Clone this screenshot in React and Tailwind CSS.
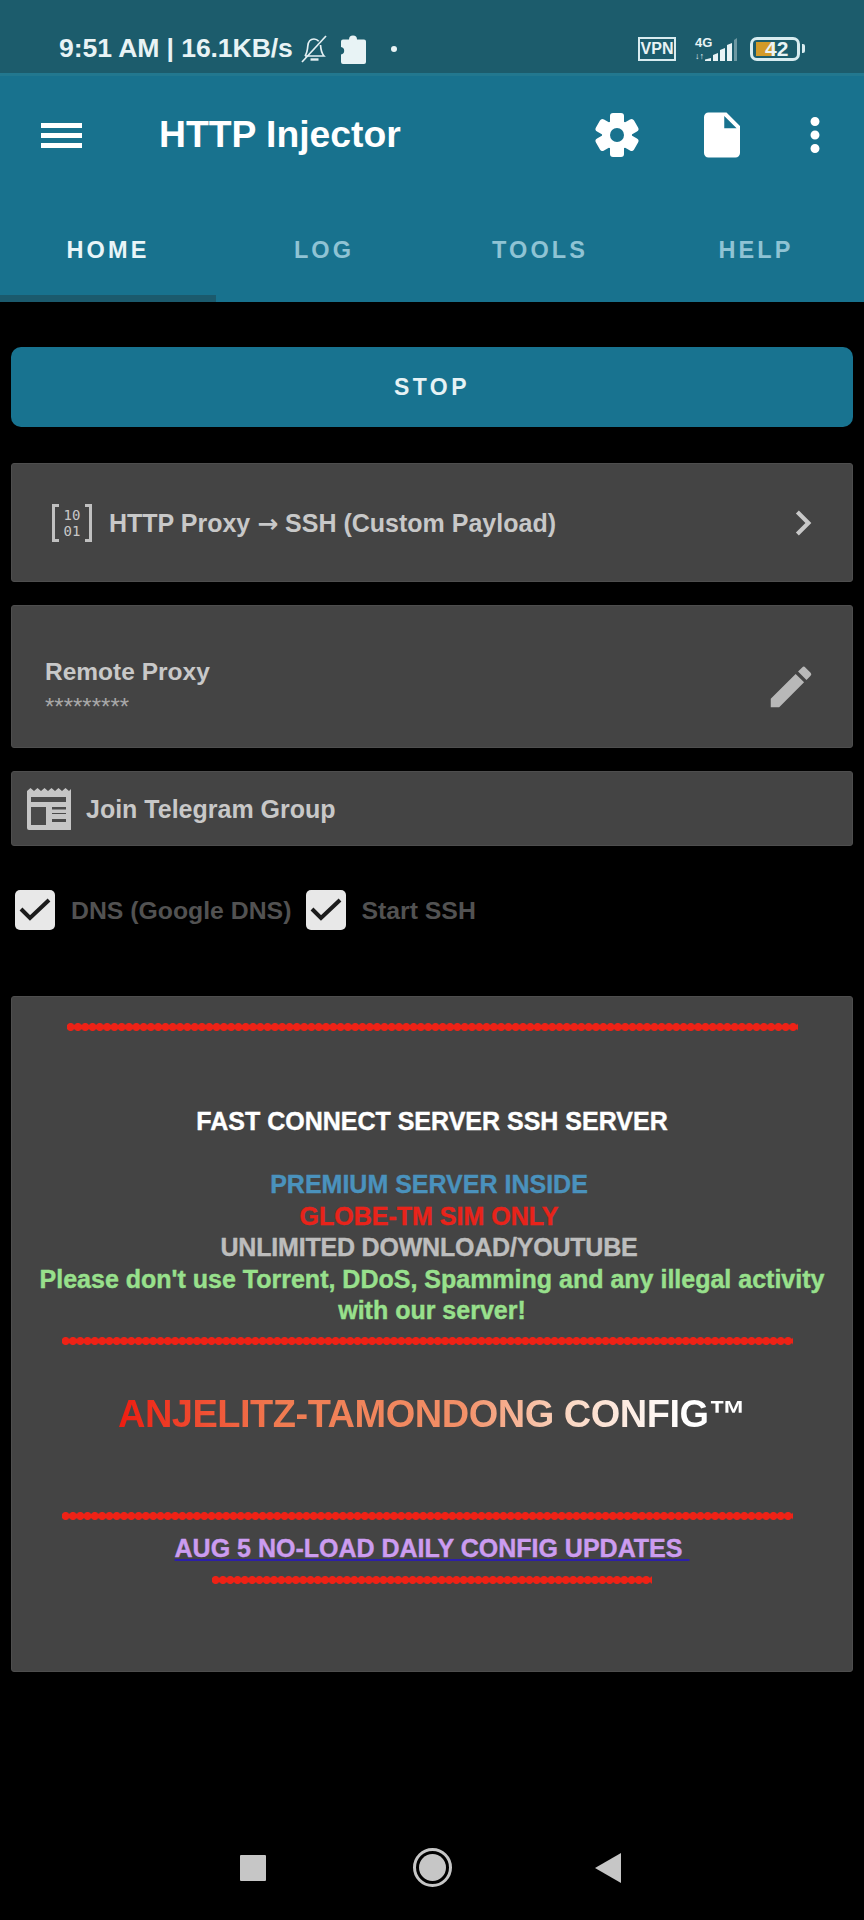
import { MdInsertDriveFile, MdMoreVert, MdChevronRight, MdEdit } from "react-icons/md";

function BellOff() {
  return (
    <svg viewBox="0 0 28 30" className="w-[28px] h-[30px] text-[#e4f0f3]" fill="none" stroke="currentColor" strokeWidth="1.700">
      <path d="M5 22c2-3 2.500-6 2.800-10C8.200 7.500 10.500 5 14 5c2 0 3.500 .8 4.700 2.300M20.500 11c.3 4 .8 8 3.500 11H5" />
      <path d="M2 28L26 2" />
      <path d="M10.500 25.500h8" strokeWidth="2.400" />
    </svg>
  );
}

function Puzzle() {
  return (
    <svg viewBox="0 0 26 30" className="h-[30px] w-[26px] text-[#e8f3f5]" fill="currentColor">
      <path d="M9 5.500a4 4 0 0 1 8 0h7a2 2 0 0 1 2 2V28a2 2 0 0 1-2 2H3a2 2 0 0 1-2-2v-7.500a3.800 3.800 0 0 0 0-7.500V7.500a2 2 0 0 1 2-2z" />
    </svg>
  );
}

function Gear() {
  return (
    <svg viewBox="0 0 46 46" className="h-[46px] w-[46px]" fill="white">
      <rect x="16" y="1" width="14" height="44" rx="3" />
      <rect x="16" y="1" width="14" height="44" rx="3" transform="rotate(60 23 23)" />
      <rect x="16" y="1" width="14" height="44" rx="3" transform="rotate(120 23 23)" />
      <circle cx="23" cy="23" r="15" />
      <circle cx="23" cy="23" r="7" fill="#18728e" />
    </svg>
  );
}

function Newspaper() {
  return (
    <svg viewBox="0 0 45 45" className="w-[45px] h-[45px] text-[#c6c6c6]">
      <path fill="currentColor" d="M1 5l3.500-3 3.500 3 3.500-3 3.500 3 3.500-3 3.500 3 3.500-3 3.500 3 3.500-3 3.500 3 3.500-3 3.500 3 3-3v40a2 2 0 0 1-2 2H3a2 2 0 0 1-2-2z" />
      <path fill="#4a4a4a" d="M5 11h35v5H5zM5 21h15v18H5zM26 21h14v2.500H26zM26 27h14v1H26zM26 33h14v3H26z" />
    </svg>
  );
}

function CheckBox() {
  return (
    <span className="flex h-[40px] w-[40px] items-center justify-center rounded-[5px] bg-[#e8e8e8]">
      <svg viewBox="0 0 40 40" className="h-[40px] w-[40px]" fill="none" stroke="#1c1c1c" strokeWidth="4">
        <path d="M6 19l9 9L34 10" />
      </svg>
    </span>
  );
}

function Dots({ className }) {
  return (
    <div className={"h-[10px] bg-[radial-gradient(circle,#ee2216_3.6px,transparent_4.4px)] bg-[length:7.3px_10px] bg-repeat-x " + className} />
  );
}

export default function App() {
  return (
    <div className="flex h-[1920px] w-[864px] flex-col overflow-hidden bg-black font-['Liberation_Sans',Arial,sans-serif]">
      {/* status bar */}
      <div className="flex h-[73px] shrink-0 items-center bg-[#1c5c6c] pl-[59px] pr-[59px] pt-[24px] text-[#e8f3f5]">
        <span className="text-[26.600px] font-bold leading-none tracking-[-0.1px]">9:51 AM | 16.1KB/s</span>
        <span className="ml-[7px]"><BellOff /></span>
        <span className="ml-[12px]"><Puzzle /></span>
        <span className="ml-[25px] h-[6px] w-[6px] rounded-full bg-[#e8f3f5]" />
        <span className="ml-auto flex h-[24px] w-[38px] items-center justify-center border-[2px] border-[#d8ecf0] text-[16px] font-bold leading-none">VPN</span>
        <span className="ml-[19px] flex w-[18px] flex-col items-start text-[13px] font-bold leading-[16px]">
          <span>4G</span>
          <span className="text-[9px] leading-[11px]">↓↑</span>
        </span>
        <svg viewBox="0 0 32 26" className="-ml-[8px] h-[26px] w-[32px]" fill="currentColor">
          <path d="M0 25h6v-3l-6 1.500zM8 25h5v-8l-5 2zM15 25h5V12l-5 2zM22 25h5V7l-5 2z" />
          <path d="M29 25h3V2l-3 2z" opacity=".4" />
        </svg>
        <span className="relative ml-[13px] flex h-[24px] w-[50px] items-center rounded-[7px] border-[3px] border-[#d8ecf0] pl-[3px]">
          <span className="h-[14px] w-[19px] bg-[#d29a28]" />
          <span className="absolute left-[12px] text-[21px] font-bold leading-none">42</span>
        </span>
        <span className="ml-[2px] h-[9px] w-[3px] rounded-r-[2px] bg-[#d8ecf0]" />
      </div>

      {/* app bar */}
      <header className="h-[229px] shrink-0 border-t-[3px] border-[#22788f] bg-[#18728e] text-white">
        <div className="mt-[22px] flex h-[74px] items-center">
          <div className="ml-[41px] flex w-[41px] flex-col gap-[5px]">
            <span className="h-[5px] bg-white" />
            <span className="h-[5px] bg-white" />
            <span className="h-[5px] bg-white" />
          </div>
          <h1 className="ml-[77px] text-[37.300px] font-bold leading-none">HTTP Injector</h1>
          <span className="ml-auto"><Gear /></span>
          <MdInsertDriveFile className="ml-[55px] h-[54px] w-[54px]" />
          <MdMoreVert className="ml-[39px] mr-[22px] h-[54px] w-[54px]" />
        </div>
        <nav className="mt-[43px] grid h-[87px] grid-cols-4 text-[23.500px] font-bold tracking-[3.100px]">
          <div className="flex flex-col items-center">
            <span className="flex h-[80px] items-center pb-[8px] text-[#e8f5f8]">HOME</span>
            <span className="h-[7px] w-full bg-[#1b5a6d]" />
          </div>
          <span className="flex h-[80px] items-center justify-center pb-[8px] text-[#8fc3d4]">LOG</span>
          <span className="flex h-[80px] items-center justify-center pb-[8px] text-[#8fc3d4]">TOOLS</span>
          <span className="flex h-[80px] items-center justify-center pb-[8px] text-[#8fc3d4]">HELP</span>
        </nav>
      </header>

      {/* main */}
      <main className="flex flex-col px-[11px] pt-[45px]">
        <button className="flex h-[80px] items-center justify-center rounded-[10px] bg-[#187390] text-[23px] font-bold tracking-[3.500px] text-[#e6f2f5]">
          STOP
        </button>

        <div className="mt-[36px] flex h-[119px] items-center rounded-[3px] border border-[#4e4e4e] bg-[#444444] text-[#c8c8c8]">
          <div className="ml-[40px] flex h-[38px] w-[40px] items-center justify-between">
            <span className="h-full w-[7px] border-y-[3px] border-l-[3px] border-[#c0c0c0]" />
            <span className="text-center font-['DejaVu_Sans_Mono',monospace] text-[14px] leading-[16px]">10<br />01</span>
            <span className="h-full w-[7px] border-y-[3px] border-r-[3px] border-[#c0c0c0]" />
          </div>
          <span className="ml-[17px] pt-[2px] text-[25px] font-bold leading-none">
            HTTP Proxy <span className="font-['DejaVu_Sans',sans-serif] text-[25px]">→</span> SSH (Custom Payload)
          </span>
          <MdChevronRight className="ml-auto mr-[24px] h-[50px] w-[50px]" />
        </div>

        <div className="mt-[23px] flex h-[143px] items-center rounded-[3px] border border-[#4e4e4e] bg-[#444444] pt-[20px] text-[#c8c8c8]">
          <div className="ml-[33px] flex flex-col">
            <span className="text-[24.500px] font-bold leading-[30px]">Remote Proxy</span>
            <span className="mt-[10px] text-[24px] leading-[20px] text-[#a8a8a8]">*********</span>
          </div>
          <MdEdit className="ml-auto mr-[34px] h-[54px] w-[54px] text-[#b8b8b8]" />
        </div>

        <div className="mt-[23px] flex h-[75px] items-center rounded-[3px] border border-[#4e4e4e] bg-[#444444] text-[#c8c8c8]">
          <span className="ml-[14px]"><Newspaper /></span>
          <span className="ml-[15px] pt-[2px] text-[25px] font-bold leading-none">Join Telegram Group</span>
        </div>

        <div className="mt-[44px] flex h-[40px] items-center pl-[4px] text-[24.800px] font-bold leading-none text-[#525252]">
          <CheckBox />
          <span className="ml-[16px] pt-[2px]">DNS (Google DNS)</span>
          <span className="ml-[15px]"><CheckBox /></span>
          <span className="ml-[15px] pt-[2px]">Start SSH</span>
        </div>

        {/* message box */}
        <section className="mt-[66px] flex h-[676px] flex-col items-center rounded-[3px] border border-[#4e4e4e] bg-[#444444] text-center font-bold [-webkit-text-stroke:0.4px]">
          <Dots className="mt-[25px] w-[731px]" />
          <p className="mt-[73px] text-[25px] leading-[32px] text-white">FAST CONNECT SERVER SSH SERVER</p>
          <div className="mt-[32px] flex flex-col text-[25px] leading-[31.500px]">
            <span className="-translate-x-[3px] text-[#4a92bd]">PREMIUM SERVER INSIDE</span>
            <span className="-translate-x-[3px] text-[#e8231a]">GLOBE-TM SIM ONLY</span>
            <span className="-translate-x-[3px] tracking-[-0.2px] text-[#bdbdbd]">UNLIMITED DOWNLOAD/YOUTUBE</span>
            <span className="text-[#98e08c]">Please don't use Torrent, DDoS, Spamming and any illegal activity<br />with our server!</span>
          </div>
          <Dots className="mt-[9px] w-[731px] -translate-x-[5px]" />
          <p className="mt-[46px] bg-[linear-gradient(90deg,#ee1c10_0%,#f07a50_25%,#f29068_55%,#fbd8c4_72%,#ffffff_90%)] bg-clip-text text-[38px] leading-[44px] tracking-[-0.5px] text-transparent [-webkit-text-stroke:0px]">ANJELITZ-TAMONDONG CONFIG™</p>
          <Dots className="mt-[75px] w-[731px] -translate-x-[5px]" />
          <p className="mt-[12px] text-[25px] leading-[30px] text-[#cc9cf0] underline decoration-[#2d1fa8] decoration-2 underline-offset-2">AUG 5 NO-LOAD DAILY CONFIG UPDATES&nbsp;</p>
          <Dots className="mt-[12px] w-[440px]" />
        </section>
      </main>

      {/* android nav */}
      <footer className="mb-[7px] mt-auto flex h-[65px] shrink-0 items-start pl-[240px] text-[#c6c6c6]">
        <span className="mt-[7px] h-[26px] w-[26px] rounded-[1px] bg-[#c6c6c6]" />
        <span className="ml-[147px] flex h-[39px] w-[39px] items-center justify-center rounded-full border-[3px] border-[#c6c6c6]">
          <span className="h-[27px] w-[27px] rounded-full bg-[#c6c6c6]" />
        </span>
        <svg viewBox="0 0 26 30" className="ml-[143px] mt-[5px] h-[30px] w-[26px]" fill="currentColor">
          <path d="M26 0v30L0 15z" />
        </svg>
      </footer>
    </div>
  );
}
